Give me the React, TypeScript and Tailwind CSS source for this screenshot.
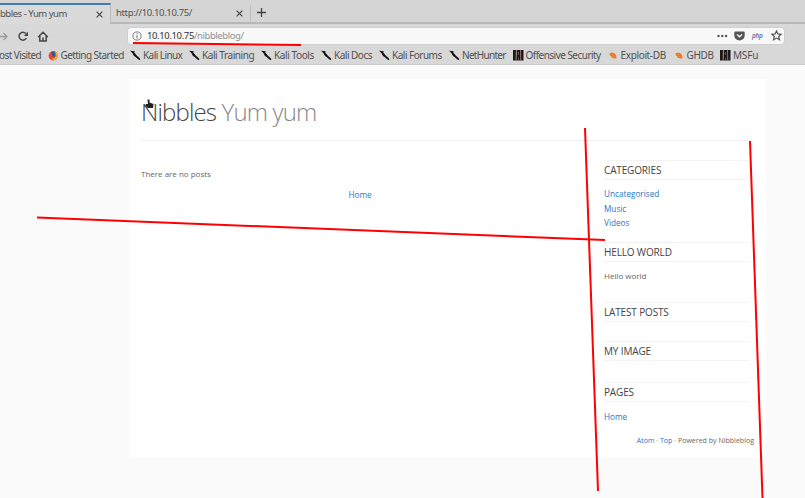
import type { ReactNode } from 'react';

const chrome = "font-['Noto_Sans',sans-serif]";

function KaliIcon() {
  return (
    <svg width="11" height="11" viewBox="0 0 11 11" className="block">
      <path d="M0 .8 4.8 1.3 4.2 2.5 7.2 6 9.8 8.2 10.4 10.2 8.4 9.6 5.6 7 4 6 2.4 3Z" fill="#111" />
    </svg>
  );
}

function FirefoxIcon() {
  return (
    <svg width="11" height="11" viewBox="0 0 11 11" className="block">
      <circle cx="5.2" cy="5.8" r="4.6" fill="#e8442f" />
      <path d="M3.2 1.8A4.6 4.6 0 0 1 9 3.4L8.4 6.6 6 7 4 5Z" fill="#3158a4" />
      <path d="M6.4.8Q9.8 2 9.9 5.8 9.6 9.2 6.4 10.3 4.4 10 4 8.4 7.8 8.6 7.6 4.5 7.4 2.4 6.4.8Z" fill="#f5a62f" />
    </svg>
  );
}

function OffsecIcon() {
  return (
    <svg width="11" height="11" viewBox="0 0 11 11" className="block">
      <rect width="10.5" height="10.5" fill="#1d1616" />
      <path d="M2.9 0H3.9V4L3.4 10.5H2.6ZM7.2 0H8L8.2 10.5H7.4Z" fill="#a09490" />
      <path d="M4.8 2H6V5H4.8ZM5 7.5H6V10H5Z" fill="#6c5048" />
    </svg>
  );
}

function ExploitIcon() {
  return (
    <svg width="9" height="11" viewBox="0 0 9 11" className="block">
      <path d="M.3 3.6 2.6 2.6 5.4 3.2 7 5 7.6 8.4 5.2 8.6 2.6 7.8 2.6 6.8.9 5.6Z" fill="#f07a28" />
    </svg>
  );
}

interface Bookmark {
  label: string;
  icon: ReactNode;
  cell: string;
  text: string;
}

const bookmarks: Bookmark[] = [
  { label: 'Getting Started', icon: <FirefoxIcon />, cell: 'w-[82.5px]', text: 'tracking-[-0.57px]' },
  { label: 'Kali Linux', icon: <KaliIcon />, cell: 'w-[59px]', text: 'tracking-[-0.57px]' },
  { label: 'Kali Training', icon: <KaliIcon />, cell: 'w-[72px]', text: 'tracking-[-0.44px]' },
  { label: 'Kali Tools', icon: <KaliIcon />, cell: 'w-[60px]', text: 'tracking-[-0.4px]' },
  { label: 'Kali Docs', icon: <KaliIcon />, cell: 'w-[58px]', text: 'tracking-[-0.5px]' },
  { label: 'Kali Forums', icon: <KaliIcon />, cell: 'w-[70px]', text: 'tracking-[-0.5px]' },
  { label: 'NetHunter', icon: <KaliIcon />, cell: 'w-[63.5px]', text: 'tracking-[-0.7px]' },
  { label: 'Offensive Security', icon: <OffsecIcon />, cell: 'w-[96px]', text: 'tracking-[-0.53px]' },
  { label: 'Exploit-DB', icon: <ExploitIcon />, cell: 'w-[66px]', text: 'pl-px tracking-[-0.35px]' },
  { label: 'GHDB', icon: <ExploitIcon />, cell: 'w-[45.5px]', text: 'pl-px tracking-[-0.35px]' },
  { label: 'MSFu', icon: <OffsecIcon />, cell: 'w-[45px]', text: 'tracking-[-0.2px]' },
];

function Close() {
  return (
    <svg width="7" height="7" viewBox="0 0 7 7" className="block shrink-0" stroke="#454545" strokeWidth="1.2">
      <path d="M.6.6 6.4 6.4M6.4.6.6 6.4" />
    </svg>
  );
}

function Browser() {
  return (
    <header className={`h-[65px] overflow-hidden bg-[#d8d8d8] text-[10px] text-[#505050] ${chrome}`}>
      <div className="flex h-6 border-b-2 border-[#b8b8b8] bg-[#d5d5d5]">
        <div className="mt-[3px] flex h-[21px] w-[111px] items-center border-t-2 border-r border-t-[#3f7fb0] border-r-[#bbb] bg-[#dadada]">
          <span className="w-24 text-[9.5px] whitespace-nowrap tracking-[-0.47px]">bbles - Yum yum</span>
          <Close />
        </div>
        <div className="mt-[5px] flex h-[17px] w-[140px] items-center border-r border-[#bebebe] pl-[5px]">
          <span className="w-[120px] text-[9.5px] whitespace-nowrap tracking-[-0.36px]">http://10.10.10.75/</span>
          <Close />
        </div>
        <svg width="9" height="9" viewBox="0 0 9 9" className="mt-2 ml-1.5" stroke="#444" strokeWidth="1.3">
          <path d="M4.5 0V9M0 4.5H9" />
        </svg>
      </div>
      <div className="flex h-[23px] items-center">
        <svg width="127" height="22" viewBox="0 0 127 22" fill="none" className="shrink-0">
          <path d="M0 11.5H7M3.5 8 7 11.5 3.5 15" stroke="#999" strokeWidth="1.3" />
          <path d="M25.8 8.6A3.9 3.9 0 1 0 26.4 13" stroke="#444" strokeWidth="1.5" />
          <path d="M28 6.8V11H23.8Z" fill="#444" />
          <path d="M38.2 12 43 7.2 47.8 12M39.8 11V16H46.2V11M43 16V12.5" stroke="#444" strokeWidth="1.5" />
        </svg>
        <div className="flex h-[18px] w-[658px] items-center rounded-sm border border-[#cfcfcf] bg-[#f8f8f8] pl-1 pr-0.5">
          <svg width="10" height="10" viewBox="0 0 10 10" fill="none" stroke="#777" className="mr-[5px]">
            <circle cx="5" cy="5" r="4.1" strokeWidth=".9" />
            <path d="M5 4.3V7.5M5 2.3V3.3" strokeWidth="1.1" />
          </svg>
          <span className="pt-px text-[9.5px] text-[#333] tracking-[-0.38px]">10.10.10.75</span>
          <span className="pt-px text-[9.5px] text-[#929292] tracking-[-0.43px]">/nibbleblog/</span>
          <div className="ml-auto flex items-center">
            <svg width="11" height="4" viewBox="0 0 11 4" fill="#555" className="mr-[6px]">
              <circle cx="1.5" cy="2" r="1.2" /><circle cx="5.3" cy="2" r="1.2" /><circle cx="9.1" cy="2" r="1.2" />
            </svg>
            <svg width="11" height="10" viewBox="0 0 11 10" className="mr-[7px]">
              <path d="M1.3.4H9.7Q10.7.4 10.7 1.4V4.4A5.2 5 0 0 1 .3 4.4V1.4Q.3.4 1.3.4Z" fill="#555" />
              <path d="M3 3.5 5.5 5.8 8 3.5" fill="none" stroke="#f8f8f8" strokeWidth="1.3" />
            </svg>
            <span className="mr-[7px] w-[12px] text-[6.5px] leading-3 font-semibold italic tracking-[-0.3px] text-[#6873a8]">php</span>
            <svg width="11" height="11" viewBox="0 0 11 11" fill="none" stroke="#555" strokeWidth="1.2">
              <path d="M5.5.9 6.9 3.9 10.2 4.2 7.7 6.5 8.5 9.8 5.5 8.1 2.5 9.8 3.3 6.5.8 4.2 4.1 3.9Z" />
            </svg>
          </div>
        </div>
      </div>
      <nav className="flex h-[18px] items-center border-b border-[#cacaca]">
        <span className="-ml-px w-[48.5px] whitespace-nowrap tracking-[-0.57px]">ost Visited</span>
        {bookmarks.map((b) => (
          <div key={b.label} className={`flex shrink-0 items-center gap-[2px] ${b.cell}`}>
            <span className="shrink-0">{b.icon}</span>
            <span className={`shrink-0 whitespace-nowrap ${b.text}`}>{b.label}</span>
          </div>
        ))}
      </nav>
    </header>
  );
}

function Panel({ title, height, children }: { title: string; height: string; children?: ReactNode }) {
  return (
    <section className={height}>
      <h2 className="h-5 border-y border-[#f3f3f3] text-[10px] leading-[19px] tracking-[-0.15px] text-[#444]">{title}</h2>
      {children}
    </section>
  );
}

export default function App() {
  return (
    <div className="relative h-[498px] w-[805px] overflow-hidden bg-[#fafafa] font-['Open_Sans',sans-serif] text-[8px] text-[#666]">
      <Browser />
      <main className="mt-[14px] ml-[129px] h-[379px] w-[637px] bg-white px-3">
        <div className="h-[62px] w-[608px] border-b border-[#f1f1f1] pt-[15px]">
          <h1 className="text-[24px] leading-[36px] font-light whitespace-nowrap tracking-[-0.84px] text-[#444]">
            Nibbles <span className="text-[#888]">Yum yum</span>
          </h1>
        </div>
        <div className="flex">
          <div className="w-[438px] pt-[26px]">
            <p className="h-[21px] leading-[14px]">There are no posts</p>
            <p className="text-center leading-[14px] text-[8.2px] text-[#2877c9]">Home</p>
          </div>
          <aside className="ml-[25px] w-[145px] pt-[19px]">
            <Panel title="CATEGORIES" height="h-[82px]">
              <ul className="pt-[7px] text-[8.2px] leading-[14.5px] text-[#2877c9]">
                <li>Uncategorised</li><li>Music</li><li>Videos</li>
              </ul>
            </Panel>
            <Panel title="HELLO WORLD" height="h-[60px]">
              <p className="pt-[6px] leading-[15px]">Hello world</p>
            </Panel>
            <Panel title="LATEST POSTS" height="h-[39px]" />
            <Panel title="MY IMAGE" height="h-[41px]" />
            <Panel title="PAGES" height="h-[52px]">
              <p className="pt-[8px] text-[8.2px] leading-[14px] text-[#2877c9]">Home</p>
            </Panel>
          </aside>
        </div>
        <footer className="text-right text-[7px] leading-[14px] tracking-[0.02px] whitespace-nowrap">
          <span className="text-[#2877c9]">Atom</span> · <span className="text-[#2877c9]">Top</span> · Powered by Nibbleblog
        </footer>
      </main>
      <svg className="pointer-events-none absolute inset-0" width="805" height="498" viewBox="0 0 805 498" fill="none">
        <path d="M147.5 99.5H149.5V102.5L153.5 104 153 108 148 108 145.5 106 146 104 148 104Z" fill="#222" />
        <g stroke="#f00" strokeWidth="2">
          <path d="M133 43 301 45" />
          <path d="M37 217.5 605 240" />
          <path d="M585 128 598 491" />
          <path d="M750 141 762.5 498" />
        </g>
      </svg>
    </div>
  );
}
